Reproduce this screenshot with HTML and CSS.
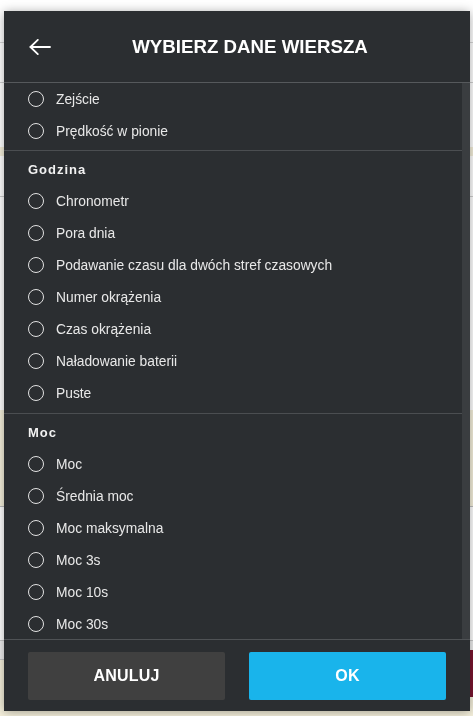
FILE: index.html
```html
<!DOCTYPE html>
<html lang="pl">
<head>
<meta charset="utf-8">
<title>Wybierz dane wiersza</title>
<link rel="stylesheet" href="styles.css">
</head>
<body>
<div class="page">
  <div class="band b-top"></div>
  <div class="band b-second"></div>
  <div class="band b-white1"></div>
  <div class="band b-beige1"></div>
  <div class="band b-white2"></div>
  <div class="band b-links"></div>
  <div class="band b-beige2"></div>
  <div class="band b-white3"></div>
  <div class="band b-gray"></div>
  <div class="band b-bottom"><span class="maroon"></span></div>
</div>

<div class="dialog">
  <header class="dlg-head">
    <button class="back" aria-label="Wstecz">
      <svg width="22" height="16" viewBox="0 0 22 16" fill="none" stroke="#ffffff" stroke-width="1.8" stroke-linecap="round" stroke-linejoin="round">
        <path d="M21 8H1.5"/>
        <path d="M8.8 0.9L1.5 8L8.8 15.1"/>
      </svg>
    </button>
    <h1 class="title">WYBIERZ DANE WIERSZA</h1>
  </header>

  <div class="dlg-body">
    <div class="list">
      <section class="group">
        <label class="opt"><span class="radio"></span><span class="lbl">Zejście</span></label>
        <label class="opt"><span class="radio"></span><span class="lbl">Prędkość w pionie</span></label>
      </section>
      <section class="group">
        <h2 class="group-title">Godzina</h2>
        <label class="opt"><span class="radio"></span><span class="lbl">Chronometr</span></label>
        <label class="opt"><span class="radio"></span><span class="lbl">Pora dnia</span></label>
        <label class="opt"><span class="radio"></span><span class="lbl">Podawanie czasu dla dwóch stref czasowych</span></label>
        <label class="opt"><span class="radio"></span><span class="lbl">Numer okrążenia</span></label>
        <label class="opt"><span class="radio"></span><span class="lbl">Czas okrążenia</span></label>
        <label class="opt"><span class="radio"></span><span class="lbl">Naładowanie baterii</span></label>
        <label class="opt"><span class="radio"></span><span class="lbl">Puste</span></label>
      </section>
      <section class="group">
        <h2 class="group-title">Moc</h2>
        <label class="opt"><span class="radio"></span><span class="lbl">Moc</span></label>
        <label class="opt"><span class="radio"></span><span class="lbl">Średnia moc</span></label>
        <label class="opt"><span class="radio"></span><span class="lbl">Moc maksymalna</span></label>
        <label class="opt"><span class="radio"></span><span class="lbl">Moc 3s</span></label>
        <label class="opt"><span class="radio"></span><span class="lbl">Moc 10s</span></label>
        <label class="opt"><span class="radio"></span><span class="lbl">Moc 30s</span></label>
      </section>
    </div>
    <div class="track"></div>
  </div>

  <footer class="dlg-foot">
    <button class="btn cancel">ANULUJ</button>
    <button class="btn ok">OK</button>
  </footer>
</div>
</body>
</html>
```

FILE: styles.css
```css
* { box-sizing: border-box; }

html, body {
  margin: 0;
  padding: 0;
  height: 100%;
  overflow: hidden;
  background: #ffffff;
  font-family: "Liberation Sans", Arial, sans-serif;
}

/* background page */
.page {
  display: flex;
  flex-direction: column;
  height: 716px;
}
.band { flex: none; width: 100%; }
.b-top { height: 43px; background: #ffffff; border-bottom: 1px solid #d6d6d6; }
.b-second { height: 40px; background: #ffffff; border-bottom: 1px solid #d0d0d0; }
.b-white1 { height: 64px; background: #ffffff; }
.b-beige1 { height: 9px; background: #f4efda; }
.b-white2 { height: 41px; background: #ffffff; border-bottom: 1px solid #cfcfcf; }
.b-links { height: 213px; background: #ffffff; }
.b-beige2 { height: 97px; background: #f5f0dc; border-bottom: 1px solid #bdbdbd; }
.b-white3 { height: 133px; background: #ffffff; }
.b-gray { height: 20px; background: #eeeeee; border-top: 1px solid #c8c8c8; border-bottom: 1px solid #c8c8c8; }
.b-bottom { height: 56px; background: #f5f0dc; position: relative; }
.maroon {
  position: absolute;
  right: 0;
  top: -10px;
  width: 6px;
  height: 47px;
  background: #7a1530;
  border-radius: 3px 0 0 3px;
}

/* dialog */
.dialog {
  position: fixed;
  left: 4px;
  top: 11px;
  width: 466px;
  height: 700px;
  background: #2b2e31;
  display: flex;
  flex-direction: column;
  box-shadow: 0 1px 10px rgba(0, 0, 0, 0.35);
  color: #e8e8e8;
}

.dlg-head {
  flex: none;
  height: 72px;
  display: flex;
  align-items: center;
  border-bottom: 1px solid #56595c;
}

.back {
  flex: none;
  margin: 0 0 0 25px;
  padding: 0;
  width: 22px;
  height: 16px;
  border: 0;
  background: none;
  display: flex;
  align-items: center;
  justify-content: center;
}
.back svg { display: block; }

.title {
  flex: 1;
  margin: 0;
  padding-right: 21px;
  text-align: center;
  font-size: 18.7px;
  font-weight: 700;
  color: #ffffff;
  letter-spacing: 0;
  line-height: 22px;
}

.dlg-body {
  flex: 1;
  display: flex;
  min-height: 0;
  overflow: hidden;
}

.list {
  flex: 1;
  min-width: 0;
}

.track {
  flex: none;
  width: 8px;
  background: #3a3d40;
}

.group {
  padding-bottom: 3px;
  border-bottom: 1px solid #4b4e51;
}
.group + .group { padding-bottom: 4px; }

.group-title {
  margin: 0;
  height: 34px;
  padding: 11px 24px 7px;
  font-size: 13px;
  line-height: 16px;
  font-weight: 700;
  letter-spacing: 1px;
  color: #f2f2f2;
}

.opt {
  display: flex;
  align-items: center;
  height: 32px;
  padding-left: 24px;
  gap: 12px;
}

.radio {
  flex: none;
  width: 16px;
  height: 16px;
  border: 1.4px solid #e2e2e2;
  border-radius: 50%;
}

.lbl {
  font-size: 13.8px;
  color: #e8e8e8;
  white-space: nowrap;
}

.dlg-foot {
  flex: none;
  height: 72px;
  border-top: 1px solid #4f5255;
  display: flex;
  gap: 24px;
  padding: 12px 24px 11px;
}

.btn {
  flex: 1;
  height: 48px;
  border: 0;
  border-radius: 2px;
  font-family: "Liberation Sans", Arial, sans-serif;
  font-size: 16px;
  font-weight: 700;
  color: #ffffff;
  letter-spacing: 0.2px;
}
.cancel { background: #404040; }
.ok { background: #19b4eb; }
```
